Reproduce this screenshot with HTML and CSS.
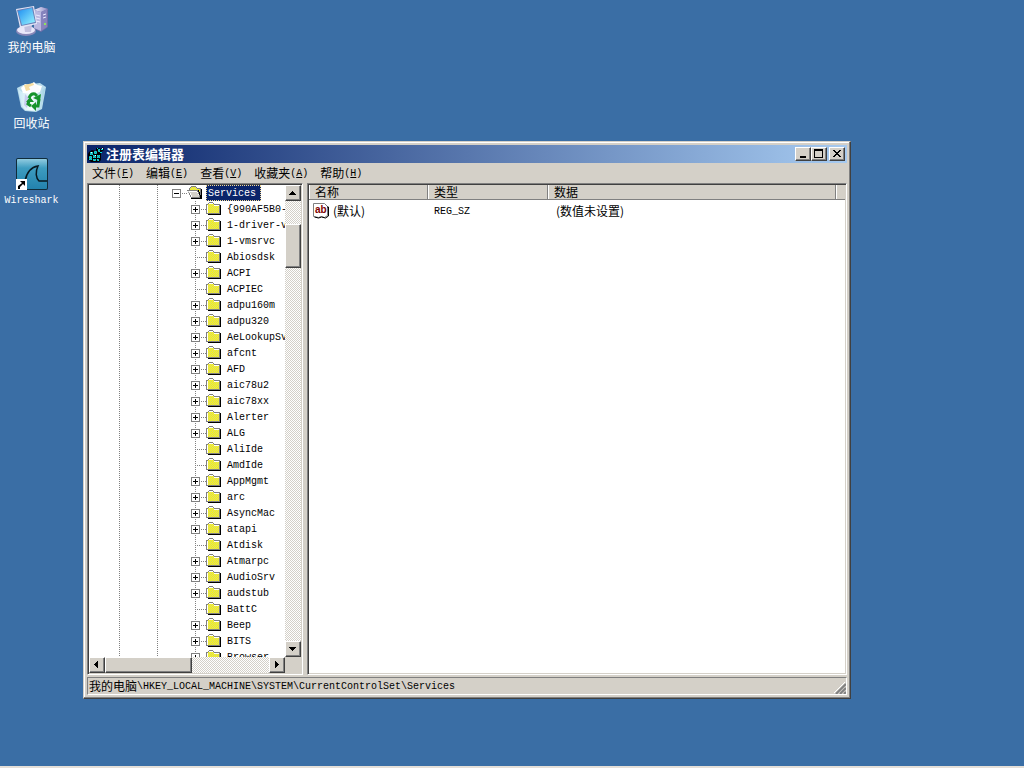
FILE: index.html
```html
<!DOCTYPE html>
<html lang="zh-CN">
<head>
<meta charset="utf-8">
<title>注册表编辑器</title>
<link rel="stylesheet" href="styles.css">
</head>
<body>
<svg class="defs" aria-hidden="true">
  <defs>
    <pattern id="dither" width="2" height="2" patternUnits="userSpaceOnUse"><path fill="#ffff00" d="M0 0h2v2H0z"/><path fill="#d4d080" d="M0 0h1v1H0zM1 1h1v1H1z"/></pattern>
    <pattern id="dots" width="2" height="2" patternUnits="userSpaceOnUse"><path fill="#00e0e0" d="M0 0h2v2H0z"/><path fill="#2c9c9c" d="M1 0h1v1H1zM0 1h1v1H0z"/></pattern>
    <linearGradient id="screen" x2="1" y2="1"><stop stop-color="#1d8df0"/><stop offset="1" stop-color="#9af6ff"/></linearGradient>
    <linearGradient id="metal" x2="1"><stop stop-color="#f4f3ff"/><stop offset="1" stop-color="#8c8bc4"/></linearGradient>
    <linearGradient id="glass" x2="1"><stop stop-color="#c6e8f4"/><stop offset=".5" stop-color="#f6fdff"/><stop offset="1" stop-color="#9fd0e4"/></linearGradient>
    <linearGradient id="sea" x2="0" y2="1"><stop stop-color="#91cbe0"/><stop offset=".3" stop-color="#3d9cc0"/><stop offset="1" stop-color="#2382ad"/></linearGradient>
    <symbol id="folder" viewBox="0 0 16 16"><path fill="#000" d="M14 4h1v10H2v-1h12z"/><path fill="#808080" d="M3 1h4v1H3zM2 2h1v1H2zM7 2h1v1H7zM0 3h2v1H1v8h12V4H8V3h6v10H0z"/><path fill="url(#dither)" d="M3 2h4v1h1v1h5v8H1V4h1V3h1z"/><path fill="#fff" d="M1 4h1v8H1zM8 4h5v1H8zM3 2h4v1H3z"/></symbol>
    <symbol id="folder-open" viewBox="0 0 16 16"><path fill="#000" d="M14 4h1v10H4v-1h10z"/><path fill="#808080" d="M4 1h5v1h1v1h4v10H4v-1H3v-2H2V8H1V6H0V5h2V3h1V2h1z"/><path fill="url(#dither)" d="M4 2h5v1h1v1h3v3h-1V5H3V3h1z"/><path fill="#fff" d="M1 6h9v1h1v2h1v3H4V10H3V8H2z"/><path fill="#d4d0c8" d="M2 7h8v1h1v2h1v2H5v-2H4V8H3z"/><path fill="#000" d="M11 5h1v2h1v3h1v3h-1v-3h-1V7h-1z"/></symbol>
  </defs>
</svg>
<main class="desktop">
  <nav class="shortcuts" aria-label="桌面">
    <a class="shortcut" href="#computer">
      <svg viewBox="0 0 32 32"><path fill="#6f6da8" d="M18 4l7-3 7 2v18l-7 5-7-3z"/><path fill="url(#metal)" d="M18 4l7-3 7 2-7 3z"/><path fill="#b9b8e0" d="M18 4l7 2v19l-7-3z"/><path fill="#8583bd" d="M25 6l6-3v18l-6 4z"/><path stroke="#eceaff" d="M20 9l4 1M20 12l4 1M20 15l4 1M27 9l3-1M27 12l3-1"/><path fill="#8ee65a" d="M28 17h2v2h-2z"/><ellipse cx="10" cy="25" rx="10" ry="5" fill="#8988b8"/><ellipse cx="10" cy="24" rx="9" ry="4" fill="#e9e8fa"/><path fill="#c1c0df" d="M8 19h8l-1 7H9z"/><path fill="#e4e5f5" d="M0 3l18-3 3 18L4 22z"/><path fill="#6a80b8" d="M1 4l16-3 3 16-15 3z"/><path fill="url(#screen)" d="M2 5l14-3 3 14-13 3z"/></svg>
      <span>我的电脑</span>
    </a>
    <a class="shortcut" href="#recycle">
      <svg viewBox="0 0 32 32"><path fill="#b9dcec" d="M1 6l6-3 17-2 6 4-4 22-6 3-11-1-4-4z"/><path fill="url(#glass)" d="M2 7l4 3h19l4-4-4 20-6 3-10-1-3-4z"/><path fill="#fff" d="M5 6l4-4 4 1 5-3 3 3 5 1-2 6-6 2-11-1z"/><path fill="#f6dda0" d="M8 3l9-2 3 5-10 3z"/><path fill="#fbfbff" d="M13 5l7-3 4 6-8 4z"/><path fill="#c7cdf0" d="M9 12l4 4-2 10-3-3z"/><path fill="none" stroke="#16942c" stroke-width="3" d="M13 16q2-5 6-4l2 2M23 17l-1 7h-3M15 24l-3-2 1-3"/><path fill="#16942c" d="M17 16l8-4-1 7zM20 20v9l-5-5zM10 20l4-5 4 5z"/></svg>
      <span>回收站</span>
    </a>
    <a class="shortcut" href="#wireshark">
      <svg viewBox="0 0 32 32"><rect width="32" height="32" rx="2" fill="#102c3a"/><rect x="1" y="1" width="30" height="30" rx="1" fill="url(#sea)"/><path fill="none" stroke="#071820" stroke-width="1.500" d="M9 23C11 13 15 9 22 8c-3 6-2 12 1 15h8"/><path fill="#fff" d="M0 21h11v11H0z"/><path fill="#000" d="M4 23h5v5l-2-2-3 3v2H2v-3l4-3z"/></svg>
      <span class="en">Wireshark</span>
    </a>
  </nav>

  <section class="window" aria-label="注册表编辑器">
    <header class="titlebar">
      <svg class="app" viewBox="0 0 16 16"><path fill="#000" d="M1 6l3-2 4 1V2h3l2 1 2-2 1 3-3 2v8l-2 2H3l-2-2H0V8z"/><path fill="url(#dots)" d="M2 6h3v3H2zM6 5h3v3H6zM1 10h3v4H1zM5 9h3v3H5zM9 9h3v3H9zM5 13h3v2H5zM9 13h2v2H9zM10 3h2v3h-2z"/><path fill="#00e0e0" d="M13 3h2v1h-2zM12 6h2v1h-2zM9 2h1v1H9z"/><path fill="#fff" d="M3 6h1v1H3zM7 9h1v1H7zM14 2h1v1h-1z"/></svg>
      <h1>注册表编辑器</h1>
      <div class="controls">
        <button aria-label="最小化"><svg viewBox="0 0 12 10"><path d="M3 7h6v2H3z"/></svg></button>
        <button aria-label="最大化"><svg viewBox="0 0 12 10"><path d="M1 0h9v9H1zM2 2v6h7V2z" fill-rule="evenodd"/></svg></button>
        <button class="close" aria-label="关闭"><svg viewBox="0 0 12 10"><path d="M2 1h2v1h1v1h2V2h1V1h2v1H9v1H8v1H7v1h1v1h1v1h1v1H8V7H7V6H5v1H4v1H2V7h1V6h1V5h1V4H4V3H3V2H2z"/></svg></button>
      </div>
    </header>
    <nav class="menubar">
      <button>文件<span class="en">(<u>F</u>)</span></button>
      <button>编辑<span class="en">(<u>E</u>)</span></button>
      <button>查看<span class="en">(<u>V</u>)</span></button>
      <button>收藏夹<span class="en">(<u>A</u>)</span></button>
      <button>帮助<span class="en">(<u>H</u>)</span></button>
    </nav>
    <div class="panes">
      <div class="pane tree-pane">
        <div class="tree en">
          <div class="node root"><button class="toggle minus" aria-label="折叠"></button><svg><use href="#folder-open"/></svg><span class="selected">Services</span></div>
          <ul>
            <li class="node"><button class="toggle" aria-label="展开"></button><svg><use href="#folder"/></svg><span>{990AF5B0-</span></li>
            <li class="node"><button class="toggle" aria-label="展开"></button><svg><use href="#folder"/></svg><span>1-driver-v</span></li>
            <li class="node"><button class="toggle" aria-label="展开"></button><svg><use href="#folder"/></svg><span>1-vmsrvc</span></li>
            <li class="node leaf"><svg><use href="#folder"/></svg><span>Abiosdsk</span></li>
            <li class="node"><button class="toggle" aria-label="展开"></button><svg><use href="#folder"/></svg><span>ACPI</span></li>
            <li class="node leaf"><svg><use href="#folder"/></svg><span>ACPIEC</span></li>
            <li class="node"><button class="toggle" aria-label="展开"></button><svg><use href="#folder"/></svg><span>adpu160m</span></li>
            <li class="node"><button class="toggle" aria-label="展开"></button><svg><use href="#folder"/></svg><span>adpu320</span></li>
            <li class="node"><button class="toggle" aria-label="展开"></button><svg><use href="#folder"/></svg><span>AeLookupSv</span></li>
            <li class="node"><button class="toggle" aria-label="展开"></button><svg><use href="#folder"/></svg><span>afcnt</span></li>
            <li class="node"><button class="toggle" aria-label="展开"></button><svg><use href="#folder"/></svg><span>AFD</span></li>
            <li class="node"><button class="toggle" aria-label="展开"></button><svg><use href="#folder"/></svg><span>aic78u2</span></li>
            <li class="node"><button class="toggle" aria-label="展开"></button><svg><use href="#folder"/></svg><span>aic78xx</span></li>
            <li class="node"><button class="toggle" aria-label="展开"></button><svg><use href="#folder"/></svg><span>Alerter</span></li>
            <li class="node"><button class="toggle" aria-label="展开"></button><svg><use href="#folder"/></svg><span>ALG</span></li>
            <li class="node leaf"><svg><use href="#folder"/></svg><span>AliIde</span></li>
            <li class="node leaf"><svg><use href="#folder"/></svg><span>AmdIde</span></li>
            <li class="node"><button class="toggle" aria-label="展开"></button><svg><use href="#folder"/></svg><span>AppMgmt</span></li>
            <li class="node"><button class="toggle" aria-label="展开"></button><svg><use href="#folder"/></svg><span>arc</span></li>
            <li class="node"><button class="toggle" aria-label="展开"></button><svg><use href="#folder"/></svg><span>AsyncMac</span></li>
            <li class="node"><button class="toggle" aria-label="展开"></button><svg><use href="#folder"/></svg><span>atapi</span></li>
            <li class="node leaf"><svg><use href="#folder"/></svg><span>Atdisk</span></li>
            <li class="node"><button class="toggle" aria-label="展开"></button><svg><use href="#folder"/></svg><span>Atmarpc</span></li>
            <li class="node"><button class="toggle" aria-label="展开"></button><svg><use href="#folder"/></svg><span>AudioSrv</span></li>
            <li class="node"><button class="toggle" aria-label="展开"></button><svg><use href="#folder"/></svg><span>audstub</span></li>
            <li class="node leaf"><svg><use href="#folder"/></svg><span>BattC</span></li>
            <li class="node"><button class="toggle" aria-label="展开"></button><svg><use href="#folder"/></svg><span>Beep</span></li>
            <li class="node"><button class="toggle" aria-label="展开"></button><svg><use href="#folder"/></svg><span>BITS</span></li>
            <li class="node"><button class="toggle" aria-label="展开"></button><svg><use href="#folder"/></svg><span>Browser</span></li>
          </ul>
        </div>
        <div class="scroll vertical">
          <button aria-label="向上"><svg viewBox="0 0 12 12"><path d="M5 4h1v1h1v1h1v1h1v1H2V7h1V6h1V5h1z"/></svg></button>
          <div class="track"><div class="thumb"></div></div>
          <button aria-label="向下"><svg viewBox="0 0 12 12"><path d="M2 4h7v1H8v1H7v1H6v1H5V7H4V6H3V5H2z"/></svg></button>
        </div>
        <div class="scroll horizontal">
          <button aria-label="向左"><svg viewBox="0 0 12 12"><path d="M7 2v7H6V8H5V7H4V6H3V5h1V4h1V3h1V2z"/></svg></button>
          <div class="track"><div class="thumb"></div></div>
          <button aria-label="向右"><svg viewBox="0 0 12 12"><path d="M4 2v7h1V8h1V7h1V6h1V5H7V4H6V3H5V2z"/></svg></button>
        </div>
        <div class="corner"></div>
      </div>
      <div class="pane list-pane">
        <table>
          <colgroup><col class="name"><col class="type"><col class="data"><col></colgroup>
          <thead><tr><th>名称</th><th>类型</th><th>数据</th><th class="rest"></th></tr></thead>
          <tbody><tr>
            <td><div class="value"><svg viewBox="0 0 16 16"><path fill="#fff" stroke="#808080" d="M.5 13.500V.5h11l3 3v9l-3 2-3-1-3 1z"/><path fill="none" stroke="#000" d="M14 4h1.500v9l-3 2-4-1-3 1-4-1"/><text x="2" y="10">ab</text></svg>(默认)</div></td>
            <td><span class="en">REG_SZ</span></td>
            <td>(数值未设置)</td>
            <td></td>
          </tr></tbody>
        </table>
      </div>
    </div>
    <footer class="statusbar">
      <span>我的电脑</span><span class="en">\HKEY_LOCAL_MACHINE\SYSTEM\CurrentControlSet\Services</span>
      <svg class="grip" viewBox="0 0 12 12"><path stroke="#fff" d="M0 11L11 0M4 11l7-7M8 11l3-3"/><path stroke="#808080" stroke-width="2" d="M2 12L12 2M6 12l6-6M10 12l2-2"/></svg>
    </footer>
  </section>
</main>
</body>
</html>
```

FILE: styles.css
```css
:root {
  --face: #d4d0c8;
  --shadow: #808080;
  --dark: #404040;
}

* { box-sizing: border-box; }

body {
  margin: 0;
  background: #3a6ea5;
  color: #000;
  font: 12px/16px "Noto Sans CJK SC", sans-serif;
}

button {
  margin: 0;
  padding: 0;
  border: 0;
  border-radius: 0;
  background: none;
  color: inherit;
  font: inherit;
}

svg { display: block; flex: none; }

.defs { position: absolute; width: 0; height: 0; }

.en { font-family: "Liberation Mono", monospace; font-size: 10px; }
span.en, .node span { padding-top: 2px; }

.desktop {
  position: relative;
  min-height: 100vh;
  border-bottom: 2px solid #e4dfd8;
}

.shortcuts {
  display: flex;
  flex-direction: column;
  gap: 12px;
  width: 63px;
  padding-top: 6px;
}

.shortcut {
  display: flex;
  flex-direction: column;
  align-items: center;
  gap: 1px;
  height: 64px;
  color: #fff;
  text-decoration: none;
}

.shortcut svg { width: 32px; height: 32px; }

.window {
  position: absolute;
  inset: 141px 173px 67px 83px;
  display: flex;
  flex-direction: column;
  padding: 3px;
  border: 1px solid;
  border-color: var(--face) var(--dark) var(--dark) var(--face);
  background: var(--face);
  box-shadow: inset -1px -1px var(--shadow), inset 1px 1px #fff;
}

.titlebar {
  display: flex;
  align-items: center;
  gap: 2px;
  height: 18px;
  padding: 0 2px 0 1px;
  background: linear-gradient(90deg, #0a246a, #a6caf0);
  color: #fff;
}

.app { width: 16px; height: 16px; }

h1 { margin: 0; font-size: 13px; line-height: 16px; font-weight: 700; }

.controls { display: flex; margin-left: auto; }

.controls button,
.scroll button,
.thumb {
  background: var(--face);
  border: 1px solid;
  border-color: #fff var(--dark) var(--dark) #fff;
  box-shadow: inset -1px -1px var(--shadow);
}

.controls button { width: 16px; height: 14px; padding: 1px; }
.controls svg { width: 12px; height: 10px; }
.controls .close { margin-left: 2px; }

.menubar { display: flex; height: 20px; padding-left: 5px; gap: 12px; }
.menubar button { display: flex; align-items: center; height: 20px; }
.menubar u { text-underline-offset: 1px; }

.panes { display: flex; flex: 1; gap: 4px; min-height: 0; }

.pane {
  padding: 1px;
  border: 1px solid;
  border-color: var(--shadow) #fff #fff var(--shadow);
  background: #fff;
  box-shadow: inset 1px 1px var(--dark), inset -1px -1px var(--face);
  overflow: hidden;
}

.tree-pane {
  display: grid;
  grid-template: minmax(0, 1fr) 16px / minmax(0, 1fr) 16px;
  flex: 0 0 216px;
}

.tree {
  overflow: hidden;
  background:
    repeating-linear-gradient(#808080 0 1px, #fff 1px 2px) 30px 0 / 1px 100% no-repeat,
    repeating-linear-gradient(#808080 0 1px, #fff 1px 2px) 68px 0 / 1px 100% no-repeat;
}

.tree ul {
  margin: 0 0 0 102px;
  padding: 0;
  list-style: none;
  background: repeating-linear-gradient(#808080 0 1px, #fff 1px 2px) 4px 0 / 1px 100% no-repeat;
}

.node {
  display: flex;
  align-items: center;
  height: 16px;
  white-space: nowrap;
  background: repeating-linear-gradient(90deg, #808080 0 1px, #fff 1px 2px) 4px 8px / 12px 1px no-repeat;
}

.node svg { width: 16px; height: 16px; margin: 0 5px 0 6px; }
.leaf svg { margin-left: 15px; }
.root { margin-left: 83px; }
.root svg { margin-right: 3px; }

.node .selected {
  height: 16px;
  padding: 1px 5px 0 2px;
  background: #0a246a;
  color: #fff;
  outline: 1px dotted #f5db95;
  outline-offset: -1px;
}

.toggle {
  flex: none;
  width: 9px;
  height: 9px;
  border: 1px solid var(--shadow);
  background:
    linear-gradient(#000, #000) 1px 3px / 5px 1px no-repeat,
    linear-gradient(#000, #000) 3px 1px / 1px 5px no-repeat,
    #fff;
}

.toggle.minus { background: linear-gradient(#000, #000) 1px 3px / 5px 1px no-repeat, #fff; }

.scroll { display: flex; }
.vertical { flex-direction: column; }

.scroll button { flex: none; width: 16px; height: 16px; padding: 1px; }
.scroll svg { width: 12px; height: 12px; }

.track {
  flex: 1;
  background: repeating-conic-gradient(#fff 0 25%, var(--face) 0 50%) 0 0 / 2px 2px;
}

.vertical .thumb { height: 44px; margin-top: 23px; }
.horizontal .thumb { width: 87px; height: 16px; }
.corner { background: var(--face); }

.list-pane { flex: 1; min-width: 0; }

table { width: 100%; border-collapse: separate; border-spacing: 0; table-layout: fixed; }
.name { width: 119px; }
.type { width: 120px; }
.data { width: 288px; }

th {
  height: 15px;
  padding: 0 6px;
  border-right: 1px solid var(--shadow);
  border-bottom: 1px solid var(--shadow);
  background: var(--face);
  box-shadow: inset 1px 0 #fff;
  font-weight: 400;
  line-height: 14px;
  text-align: left;
}

th.rest { border-right: 0; }
td { height: 16px; padding: 1px 6px 0; white-space: nowrap; }
td:first-child { padding: 1px 4px 0; }
td:nth-child(3) { padding-left: 8px; }
.value { display: flex; align-items: center; gap: 4px; }
.value svg { width: 16px; height: 16px; }
.value text { fill: #800000; font: 700 10px "Liberation Sans", sans-serif; }

.statusbar {
  display: flex;
  align-items: center;
  height: 18px;
  margin-top: 2px;
  padding-left: 1px;
  border: 1px solid;
  border-color: var(--shadow) #fff #fff var(--shadow);
}

.grip { width: 12px; height: 12px; margin: 4px 0 0 auto; }
```
